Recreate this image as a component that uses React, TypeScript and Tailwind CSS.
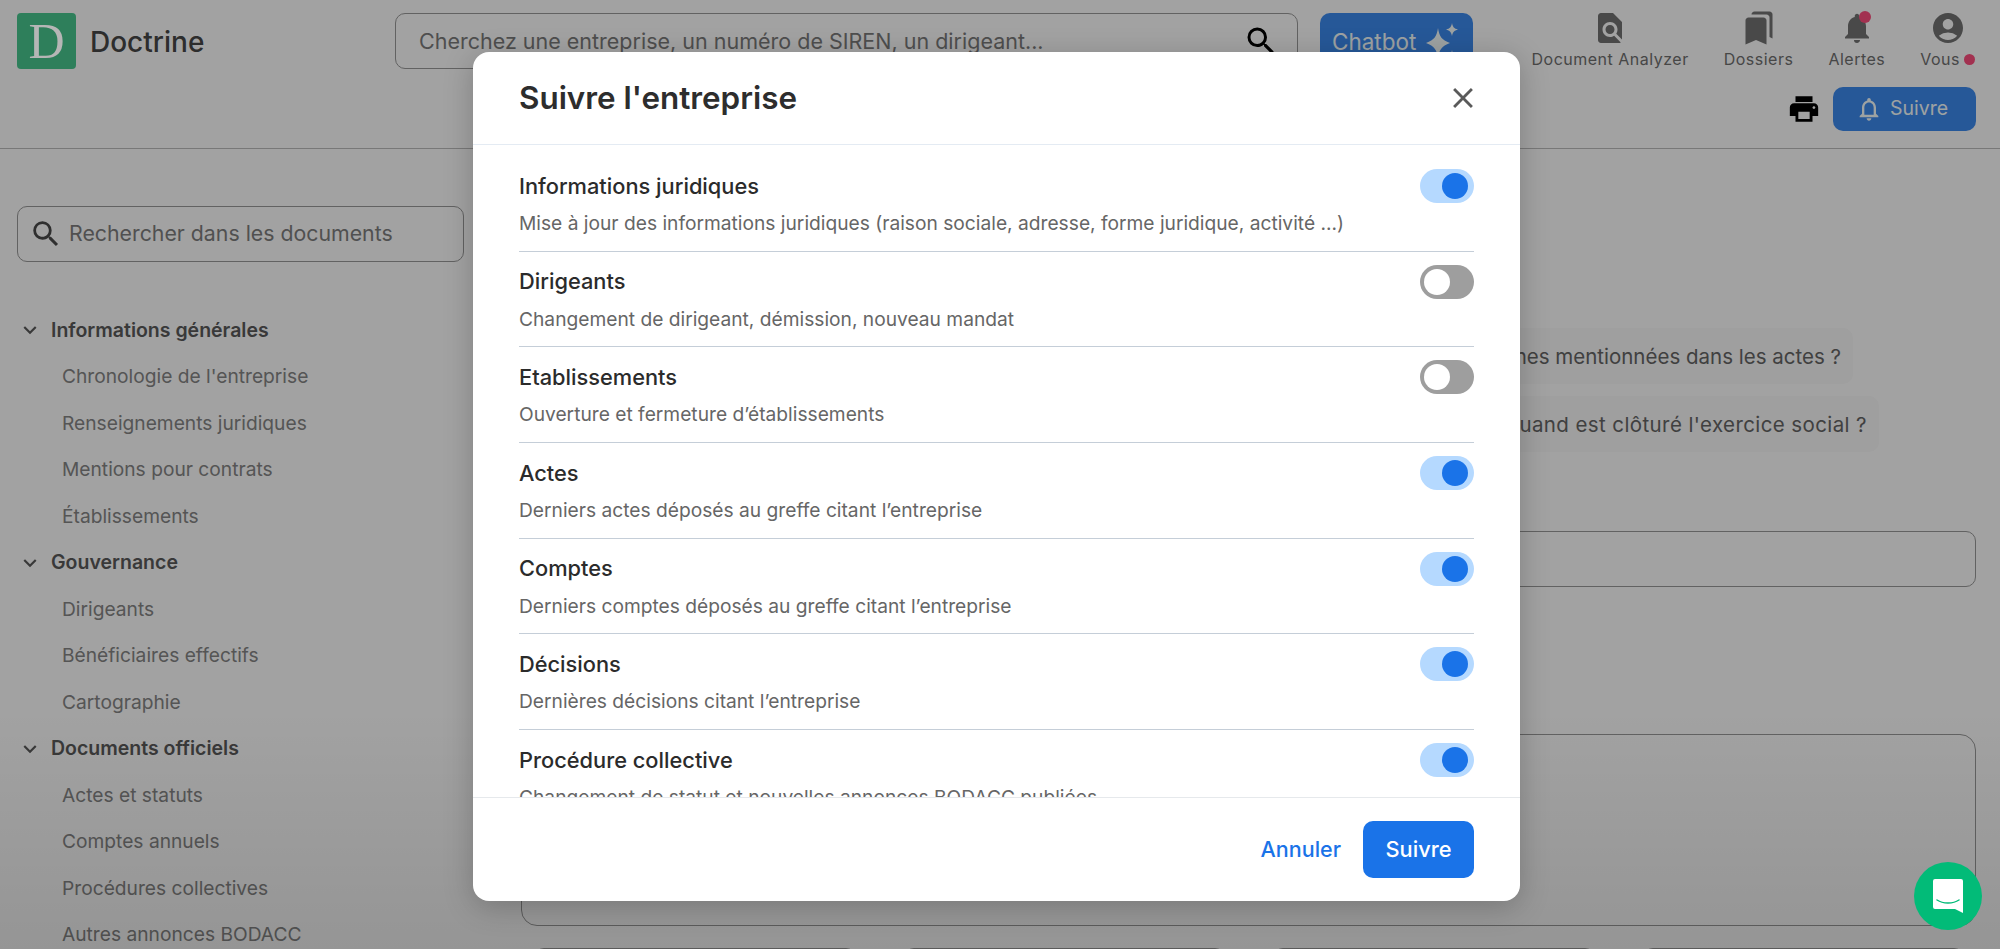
import React from "react";
import { MdAccountCircle, MdBookmarks, MdClose, MdExpandMore, MdFindInPage, MdNotifications, MdNotificationsNone, MdPrint, MdSearch } from "react-icons/md";

interface NavGroup {
  title: string;
  items: string[];
}

interface FollowRow {
  title: string;
  description: string;
  enabled: boolean;
}

const groups: NavGroup[] = [
  {
    title: "Informations générales",
    items: ["Chronologie de l'entreprise", "Renseignements juridiques", "Mentions pour contrats", "Établissements"],
  },
  { title: "Gouvernance", items: ["Dirigeants", "Bénéficiaires effectifs", "Cartographie"] },
  {
    title: "Documents officiels",
    items: ["Actes et statuts", "Comptes annuels", "Procédures collectives", "Autres annonces BODACC"],
  },
];

const rows: FollowRow[] = [
  {
    title: "Informations juridiques",
    description: "Mise à jour des informations juridiques (raison sociale, adresse, forme juridique, activité ...)",
    enabled: true,
  },
  { title: "Dirigeants", description: "Changement de dirigeant, démission, nouveau mandat", enabled: false },
  { title: "Etablissements", description: "Ouverture et fermeture d’établissements", enabled: false },
  { title: "Actes", description: "Derniers actes déposés au greffe citant l’entreprise", enabled: true },
  { title: "Comptes", description: "Derniers comptes déposés au greffe citant l’entreprise", enabled: true },
  { title: "Décisions", description: "Dernières décisions citant l’entreprise", enabled: true },
  { title: "Procédure collective", description: "Changement de statut et nouvelles annonces BODACC publiées", enabled: true },
];

const Sparkles = () => (
  <svg viewBox="0 0 32 40" className="w-[32px] h-[40px] mt-[10px]" fill="currentColor">
    <path d="M12 5 C13.200 13 15.500 17 24 20 C15.500 23 13.200 27 12 35 C10.800 27 8.500 23 0 20 C8.500 17 10.800 13 12 5Z" />
    <path d="M26 0 C26.800 4 28 5.500 32 6.500 C28 7.500 26.800 9 26 13 C25.200 9 24 7.500 20 6.500 C24 5.500 25.200 4 26 0Z" />
    <path d="M26 27 C26.800 31 28 32.500 32 33.500 C28 34.500 26.800 36 26 40 C25.200 36 24 34.500 20 33.500 C24 32.500 25.200 31 26 27Z" />
  </svg>
);

const Toggle = ({ enabled }: { enabled: boolean }) =>
  enabled ? (
    <div className="w-[54px] h-[34px] rounded-full bg-[#b5d9ff] flex items-center justify-end pr-[6px]">
      <div className="w-[26px] h-[26px] rounded-full bg-[#1a73e8]" />
    </div>
  ) : (
    <div className="w-[54px] h-[34px] rounded-full bg-[#9e9e9e] flex items-center pl-[4px]">
      <div className="w-[26px] h-[26px] rounded-full bg-white" />
    </div>
  );

const App: React.FC = () => {
  return (
    <div className="relative h-[949px] overflow-hidden bg-white font-[Inter,sans-serif] text-[#4d4d4d]">
      {/* Header */}
      <header className="h-[149px] border-b border-[#bdbdbd] px-[17px] pt-[13px]">
        <div className="flex h-[56px] items-start">
          <div className="relative z-20 w-[59px] h-[56px] rounded-[4px] bg-[#2e7f5b] flex items-center justify-center font-['Liberation_Serif',serif] text-[50px] leading-none text-[#b6b6b6]">
            D
          </div>
          <span className="ml-[14px] mt-[11px] w-[112px] text-[28px] leading-[36px] font-medium text-[#474747]">Doctrine</span>
          <div className="ml-[193px] w-[903px] h-[56px] rounded-[10px] border border-[#9a9a9a] flex items-center justify-between pl-[23px] pr-[18px]">
            <span className="text-[21.500px] text-[#7c7c7c]">Cherchez une entreprise, un numéro de SIREN, un dirigeant...</span>
            <MdSearch className="w-[36px] h-[36px] text-black" />
          </div>
          <div className="ml-[22px] w-[153px] h-[70px] rounded-[10px] bg-[#3d8bf0] text-[#f8ffff] flex items-start pl-[12px] gap-[10px]">
            <span className="mt-[14px] text-[22.500px] leading-[30px]">Chatbot</span>
            <Sparkles />
          </div>
          <nav className="ml-auto mr-[8px] flex items-start gap-[35px] text-[16px] leading-[24px] tracking-[0.5px] text-[#707070]">
            <div className="flex flex-col items-center -mt-[3px]">
              <MdFindInPage className="w-[36px] h-[36px] text-[#737373]" />
              <span className="mt-[1px] whitespace-nowrap">Document Analyzer</span>
            </div>
            <div className="flex flex-col items-center -mt-[3px]">
              <MdBookmarks className="w-[36px] h-[36px] text-[#737373]" />
              <span className="mt-[1px]">Dossiers</span>
            </div>
            <div className="relative flex flex-col items-center -mt-[3px]">
              <MdNotifications className="w-[36px] h-[36px] text-[#737373]" />
              <span className="absolute top-[1px] right-[14px] w-[12px] h-[12px] rounded-full bg-[#ff4d7e]" />
              <span className="mt-[1px]">Alertes</span>
            </div>
            <div className="flex flex-col items-center -mt-[3px]">
              <MdAccountCircle className="w-[36px] h-[36px] text-[#737373]" />
              <span className="mt-[1px] flex items-center gap-[4px]">
                Vous
                <span className="w-[11px] h-[11px] rounded-full bg-[#ff4d7e]" />
              </span>
            </div>
          </nav>
        </div>
        <div className="mt-[18px] mr-[7px] flex items-center justify-end gap-[12px]">
          <MdPrint className="w-[34px] h-[34px] text-black" />
          <div className="w-[143px] h-[44px] rounded-[10px] bg-[#3d8bf0] text-[#f8ffff] flex items-center justify-center gap-[7px] pr-[6px] text-[19.500px]">
            <MdNotificationsNone className="w-[28px] h-[28px]" />
            Suivre
          </div>
        </div>
      </header>

      <div className="flex">
        {/* Sidebar */}
        <aside className="w-[521px] shrink-0 pl-[17px] pt-[57px]">
          <div className="w-[447px] h-[56px] rounded-[10px] border border-[#9a9a9a] flex items-center pl-[11px] gap-[6px] text-[21.300px] text-[#7f7f7f]">
            <MdSearch className="w-[34px] h-[34px] text-[#4a4a4a]" />
            Rechercher dans les documents
          </div>
          <div className="mt-[45px]">
            {groups.map((group) => (
              <div key={group.title}>
                <div className="flex items-center h-[46.500px] text-[19.500px] font-semibold text-[#5a5a5a]">
                  <MdExpandMore className="w-[26px] h-[26px] mr-[8px] text-[#5a5a5a]" />
                  {group.title}
                </div>
                {group.items.map((item) => (
                  <div key={item} className="flex items-center h-[46.500px] pl-[45px] text-[19.200px] text-[#868686]">
                    {item}
                  </div>
                ))}
              </div>
            ))}
          </div>
        </aside>

        {/* Main */}
        <main className="flex-1 pr-[24px]">
          <div className="mt-[179px] flex flex-col gap-[12px]">
            <div className="self-end mr-[123px] h-[56px] flex items-center rounded-[10px] bg-[#fafafa] px-[12px] pt-[2px] text-[20.500px] text-[#666666]">
              Quelles sont les personnes mentionnées dans les actes ?
            </div>
            <div className="self-end mr-[97px] h-[56px] flex items-center rounded-[10px] bg-[#fafafa] px-[12px] pt-[2px] text-[20.500px] tracking-[0.4px] text-[#666666]">
              Quand est clôturé l'exercice social ?
            </div>
          </div>
          <div className="mt-[79px] h-[56px] rounded-[10px] border border-[#9a9a9a]" />
          <div className="mt-[147px] h-[192px] rounded-[16px] border border-[#9a9a9a]" />
          <div className="mt-[22px] grid grid-cols-4 gap-[48px] pl-[13px] pr-[12px]">
            <div className="h-[20px] rounded-t-[10px] border border-[#9a9a9a]" />
            <div className="h-[20px] rounded-t-[10px] border border-[#9a9a9a]" />
            <div className="h-[20px] rounded-t-[10px] border border-[#9a9a9a]" />
            <div className="h-[20px] rounded-t-[10px] border border-[#9a9a9a]" />
          </div>
        </main>
      </div>

      {/* Overlay */}
      <div className="absolute inset-0 z-10 bg-black/[0.365]" />
      <div className="absolute inset-x-0 bottom-0 h-[240px] z-10 bg-linear-to-t from-black/[0.08] to-transparent" />

      {/* Modal */}
      <div className="absolute z-20 left-[473px] top-[52px] w-[1047px] h-[849px] rounded-[16px] bg-white flex flex-col overflow-hidden shadow-[0_6px_30px_rgba(0,0,0,0.22)]">
        <div className="h-[93px] shrink-0 border-b border-[#e4ebf3] flex items-center justify-between pl-[46px] pr-[40px]">
          <h2 className="mt-[2px] text-[31.400px] font-semibold text-[#2d2d2d]">Suivre l'entreprise</h2>
          <MdClose className="w-[34px] h-[34px] text-[#5a5a5a]" />
        </div>
        <div className="flex-1 min-h-0 overflow-hidden px-[46px] pt-[11px]">
          {rows.map((row) => (
            <div key={row.title} className="h-[95.660px] border-b border-[#c5ced8] pt-[13px]">
              <div className="flex h-[34px] items-center justify-between">
                <span className="text-[21.800px] font-[450] text-[#2b2b2b]">{row.title}</span>
                <Toggle enabled={row.enabled} />
              </div>
              <p className="mt-[8px] text-[19.200px] leading-[24px] text-[#666666]">{row.description}</p>
            </div>
          ))}
        </div>
        <div className="h-[104px] shrink-0 border-t border-[#e6e9ec] flex items-center justify-end gap-[22px] pr-[46px]">
          <span className="text-[21.500px] font-medium text-[#1a73e8]">Annuler</span>
          <div className="w-[111px] h-[57px] rounded-[10px] bg-[#1a73e8] text-white flex items-center justify-center text-[21.800px] font-medium">
            Suivre
          </div>
        </div>
      </div>

      {/* Chat widget */}
      <div className="absolute z-20 left-[1914px] top-[862px] w-[68px] h-[68px] rounded-full bg-[#02bb78] flex items-center justify-center">
        <svg viewBox="0 0 30 34" className="w-[30px] h-[34px]">
          <path d="M2 0H28a2 2 0 0 1 2 2V34L22 30H2a2 2 0 0 1-2-2V2a2 2 0 0 1 2-2Z" fill="#fff" />
          <path d="M4 21C10 25 20 25 26 21" stroke="#02bb78" strokeWidth="1.500" fill="none" strokeLinecap="round" />
        </svg>
      </div>
    </div>
  );
};

export default App;
